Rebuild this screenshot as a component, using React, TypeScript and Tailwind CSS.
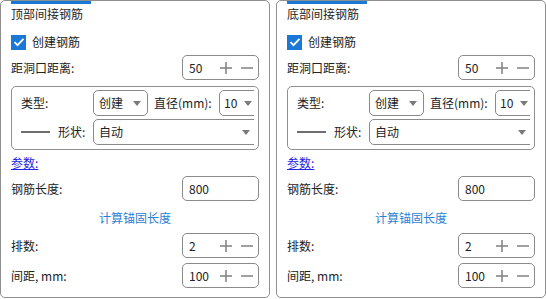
import React from 'react';

const font = { fontFamily: '"Noto Sans CJK SC", "Noto Sans", sans-serif' };

function Arrow() {
  return (
    <svg className="w-[8px] h-[5px] shrink-0" viewBox="0 0 8 5">
      <path d="M0 0h8L4 5z" fill="#7a7a7a" />
    </svg>
  );
}

function Spinner({ value }: { value: string }) {
  return (
    <div className="flex items-center w-[77px] h-[25px] border border-[#8a8a8a] rounded-[5px] pl-[6px] text-[12px] text-[#222]">
      <span className="flex-1">{value}</span>
      <svg className="w-[12px] h-[12px] mr-[9px]" viewBox="0 0 12 12">
        <path d="M6 0v12M0 6h12" stroke="#808080" strokeWidth="1.5" />
      </svg>
      <svg className="w-[12px] h-[12px] mr-[5px]" viewBox="0 0 12 12">
        <path d="M0 6h12" stroke="#808080" strokeWidth="1.5" />
      </svg>
    </div>
  );
}

function Row({ label, children, mt }: { label: string; children: React.ReactNode; mt: string }) {
  return (
    <div className={`flex items-center justify-between h-[25px] ${mt}`}>
      <span className="text-[12px] text-[#222]">{label}</span>
      {children}
    </div>
  );
}

function Panel({ title }: { title: string }) {
  return (
    <div className="relative w-[270px] h-[298px] border border-[#8f8f8f] rounded-[5px] px-[10px] flex flex-col shrink-0">
      <div className="absolute top-0 left-[10px] w-[80px] h-[3px] bg-[#1a78d6]" />
      <div className="mt-[5px] h-[16px] leading-[16px] text-[12px] text-[#1e1e1e]">{title}</div>
      <div className="mt-[12px] h-[16px] flex items-center gap-[6px]">
        <div className="w-[15px] h-[15px] bg-[#1a78d6] flex items-center justify-center">
          <svg className="w-[12px] h-[12px]" viewBox="0 0 12 12">
            <path d="M1.5 6.2l3 3L10.5 2.8" fill="none" stroke="#fff" strokeWidth="1.8" />
          </svg>
        </div>
        <span className="text-[12px] text-[#222]">创建钢筋</span>
      </div>
      <Row label="距洞口距离:" mt="mt-[5px]">
        <Spinner value="50" />
      </Row>
      <div className="mt-[6px] h-[64px] border border-[#8f8f8f] rounded-[5px] pl-[9px] pr-[4px] pt-[3px] flex flex-col">
        <div className="overflow-hidden flex flex-col gap-[3px]">
          <div className="flex items-center h-[26px] text-[12px] text-[#222] w-[270px]">
            <span className="w-[72px]">类型:</span>
            <div className="flex items-center w-[55px] h-[26px] border border-[#8a8a8a] rounded-[5px] pl-[5px] pr-[6px] justify-between">
              <span>创建</span>
              <Arrow />
            </div>
            <span className="ml-[6px] w-[65px]">直径(mm):</span>
            <div className="flex items-center w-[50px] h-[26px] border border-[#8a8a8a] rounded-[5px] pl-[4px] shrink-0">
              <span>10</span>
              <span className="ml-[7px]">
                <Arrow />
              </span>
            </div>
          </div>
          <div className="flex items-center h-[26px] text-[12px] text-[#222] w-[270px]">
            <div className="w-[30px] h-[2px] bg-[#6e6e6e] mr-[8px] -ml-[1px]" />
            <span className="w-[35px]">形状:</span>
            <div className="flex items-center w-[172px] h-[26px] border border-[#8a8a8a] rounded-[5px] pl-[5px] pr-[14px] justify-between shrink-0">
              <span>自动</span>
              <Arrow />
            </div>
          </div>
        </div>
      </div>
      <div className="mt-[5px] h-[16px] leading-[16px] text-[12px]">
        <span className="text-[#2323e6] underline">参数:</span>
      </div>
      <Row label="钢筋长度:" mt="mt-[5px]">
        <div className="flex items-center w-[77px] h-[25px] border border-[#8a8a8a] rounded-[5px] pl-[6px] text-[12px] text-[#222]">800</div>
      </Row>
      <div className="mt-[9px] h-[16px] leading-[16px] text-center text-[12px] text-[#2a7fd4]">计算锚固长度</div>
      <Row label="排数:" mt="mt-[7px]">
        <Spinner value="2" />
      </Row>
      <Row label="间距, mm:" mt="mt-[5px]">
        <Spinner value="100" />
      </Row>
    </div>
  );
}

export default function App() {
  return (
    <div className="w-[546px] h-[299px] bg-white flex gap-[6px]" style={font}>
      <Panel title="顶部间接钢筋" />
      <Panel title="底部间接钢筋" />
    </div>
  );
}
